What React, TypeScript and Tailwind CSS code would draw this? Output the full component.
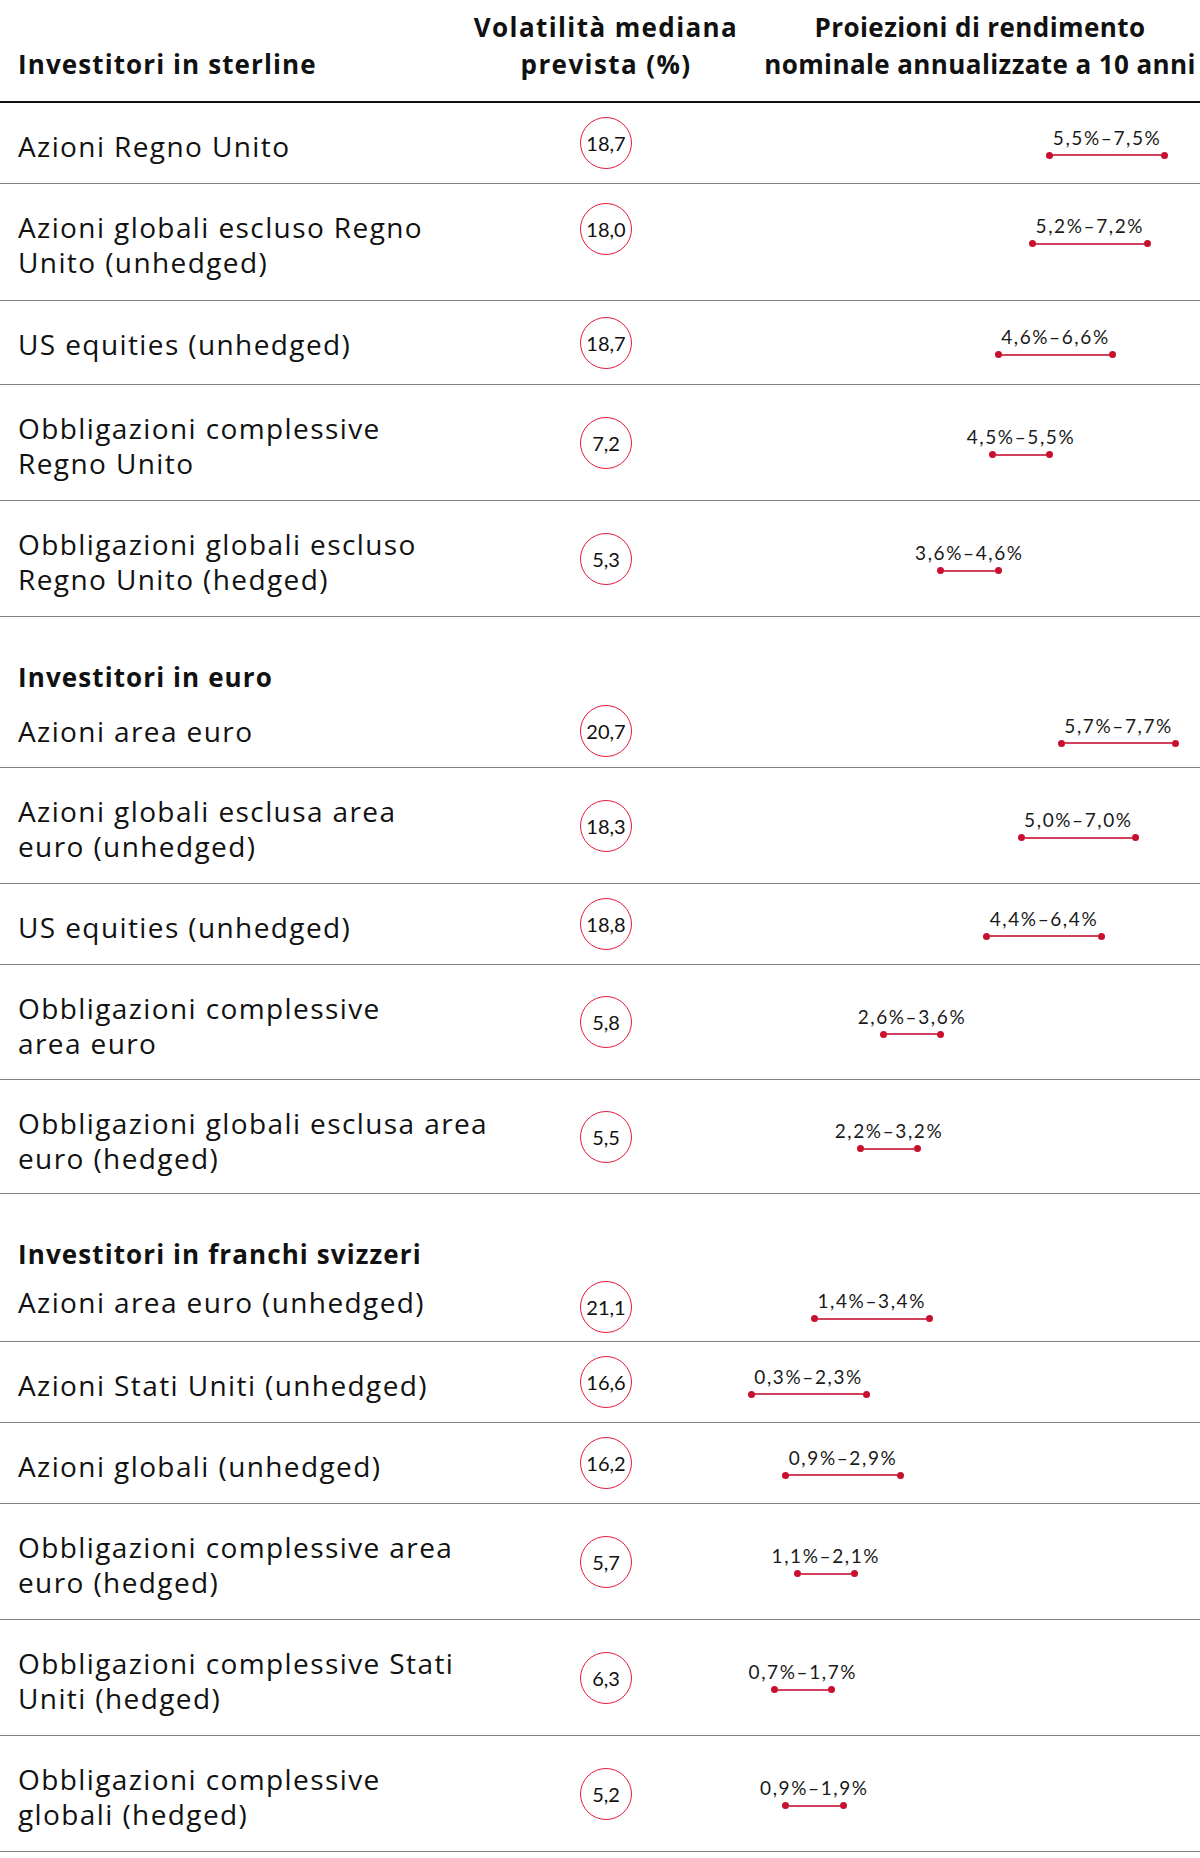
import React from "react";

type Row = {
  label: string[];
  vol: string;
  lo: number;
  hi: number;
  top?: boolean;
  pb?: string;
};

type Section = {
  title: string;
  firstPad?: string;
  rows: Row[];
};

const SECTIONS: Section[] = [
  {
    title: "Investitori in sterline",
    rows: [
      { label: ["Azioni Regno Unito"], vol: "18,7", lo: 5.5, hi: 7.5 },
      { label: ["Azioni globali escluso Regno", "Unito (unhedged)"], vol: "18,0", lo: 5.2, hi: 7.2, top: true, pb: "pb-[20px]" },
      { label: ["US equities (unhedged)"], vol: "18,7", lo: 4.6, hi: 6.6, pb: "pb-[22px]" },
      { label: ["Obbligazioni complessive", "Regno Unito"], vol: "7,2", lo: 4.5, hi: 5.5 },
      { label: ["Obbligazioni globali escluso", "Regno Unito (hedged)"], vol: "5,3", lo: 3.6, hi: 4.6 },
    ],
  },
  {
    title: "Investitori in euro",
    firstPad: "pt-[19px] pb-[18px]",
    rows: [
      { label: ["Azioni area euro"], vol: "20,7", lo: 5.7, hi: 7.7 },
      { label: ["Azioni globali esclusa area", "euro (unhedged)"], vol: "18,3", lo: 5.0, hi: 7.0 },
      { label: ["US equities (unhedged)"], vol: "18,8", lo: 4.4, hi: 6.4 },
      { label: ["Obbligazioni complessive", "area euro"], vol: "5,8", lo: 2.6, hi: 3.6, pb: "pb-[18px]" },
      { label: ["Obbligazioni globali esclusa area", "euro (hedged)"], vol: "5,5", lo: 2.2, hi: 3.2, pb: "pb-[17px]" },
    ],
  },
  {
    title: "Investitori in franchi svizzeri",
    firstPad: "pt-[13px] pb-[21px]",
    rows: [
      { label: ["Azioni area euro (unhedged)"], vol: "21,1", lo: 1.4, hi: 3.4 },
      { label: ["Azioni Stati Uniti (unhedged)"], vol: "16,6", lo: 0.3, hi: 2.3 },
      { label: ["Azioni globali (unhedged)"], vol: "16,2", lo: 0.9, hi: 2.9 },
      { label: ["Obbligazioni complessive area", "euro (hedged)"], vol: "5,7", lo: 1.1, hi: 2.1 },
      { label: ["Obbligazioni complessive Stati", "Uniti (hedged)"], vol: "6,3", lo: 0.7, hi: 1.7 },
      { label: ["Obbligazioni complessive", "globali (hedged)"], vol: "5,2", lo: 0.9, hi: 1.9 },
    ],
  },
];

// chart column starts at x=672; 0% sits at x=734, 57.4px per point
const ZERO = 62;
const PER_PT = 57.4;
const DOT = 7;

const pct = (n: number) => n.toFixed(1).replace(".", ",");

function RangeBar({ lo, hi }: { lo: number; hi: number }) {
  const left = ZERO + lo * PER_PT - DOT / 2;
  const width = (hi - lo) * PER_PT + DOT;
  return (
    <div className="flex flex-col items-center" style={{ marginLeft: left, width }}>
      <span className="whitespace-nowrap font-['Lato',sans-serif] text-[19px] leading-[20px] tracking-[1.6px] text-[#1a1a1a]">
        {pct(lo)}%–{pct(hi)}%
      </span>
      <div className="mt-[4px] flex h-[7px] w-full items-center">
        <span className="h-[7px] w-[7px] shrink-0 rounded-full bg-[#c8102e]" />
        <span className="h-[2px] flex-1 bg-[#d3425d]" />
        <span className="h-[7px] w-[7px] shrink-0 rounded-full bg-[#c8102e]" />
      </div>
    </div>
  );
}

function DataRow({ row, pad }: { row: Row; pad?: string }) {
  const padding = pad ?? `pt-[26px] ${row.pb ?? "pb-[19px]"}`;
  return (
    <div className={`flex border-b border-[#808080] ${row.top ? "items-start" : "items-center"}`}>
      <div className={`w-[540px] pl-[18px] text-[28px] leading-[35px] tracking-[1.4px] text-[#111] ${padding}`}>
        {row.label.map((l) => (
          <div key={l} className="whitespace-nowrap">
            {l}
          </div>
        ))}
      </div>
      <div className={`flex w-[132px] justify-center ${row.top ? "mt-[19px]" : ""}`}>
        <div className="flex h-[52px] w-[52px] items-center justify-center rounded-full border border-[#e8193c] font-['Lato',sans-serif] text-[20px] text-[#111]">
          {row.vol}
        </div>
      </div>
      <div className={`flex flex-1 ${row.top ? "mt-[32px]" : ""}`}>
        <RangeBar lo={row.lo} hi={row.hi} />
      </div>
    </div>
  );
}

export default function App() {
  const [sterling, ...rest] = SECTIONS;
  return (
    <div className="w-[1200px] bg-white font-['Open_Sans','Liberation_Sans',sans-serif] text-[#111]">
      <div className="flex items-end border-b-2 border-[#111] pt-[9px] pb-[18px] text-[26px] font-bold leading-[37px]">
        <div className="w-[456px] pl-[18px] whitespace-nowrap tracking-[1.1px]">{sterling.title}</div>
        <div className="w-[300px] tracking-[1.4px]">
          <div className="flex justify-center whitespace-nowrap">Volatilità mediana</div>
          <div className="flex justify-center whitespace-nowrap">prevista (%)</div>
        </div>
        <div className="flex-1 pl-[4px] tracking-[0.4px]">
          <div className="flex justify-center whitespace-nowrap">Proiezioni di rendimento</div>
          <div className="flex justify-center whitespace-nowrap">nominale annualizzate a 10 anni</div>
        </div>
      </div>

      {sterling.rows.map((r) => (
        <DataRow key={r.label.join(" ")} row={r} />
      ))}

      {rest.map((s) => (
        <div key={s.title}>
          <div className="pl-[18px] pt-[43px] text-[26px] font-bold leading-[35px] tracking-[1.1px]">{s.title}</div>
          {s.rows.map((r, i) => (
            <DataRow key={r.label.join(" ")} row={r} pad={i === 0 ? s.firstPad : undefined} />
          ))}
        </div>
      ))}
    </div>
  );
}
